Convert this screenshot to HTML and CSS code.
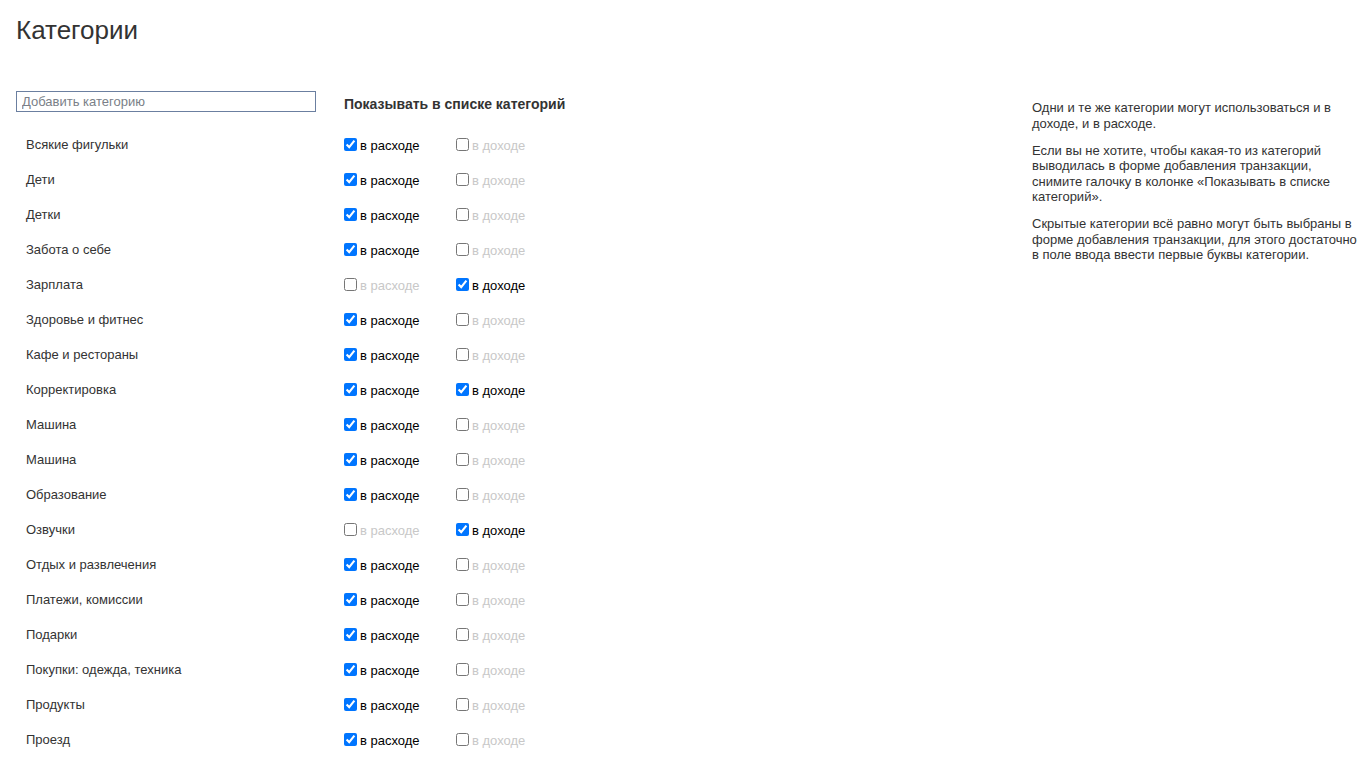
FILE: index.html
```html
<!DOCTYPE html>
<html>
<head>
<meta charset="utf-8">
<link rel="stylesheet" href="styles.css">
</head>
<body>

<div class="page">
  <h1>Категории</h1>

  <div class="main">
    <div class="list">
      <div class="head">
        <div class="name-col">
          <input type="text" class="add-input" placeholder="Добавить категорию">
        </div>
        <div class="head-title">Показывать в списке категорий</div>
      </div>

      <div id="rows"></div>
    </div>

    <div class="help">
      <p>Одни и те же категории могут использоваться и в доходе, и в расходе.</p>
      <p>Если вы не хотите, чтобы какая-то из категорий выводилась в форме добавления транзакции, снимите галочку в колонке «Показывать в списке категорий».</p>
      <p>Скрытые категории всё равно могут быть выбраны в форме добавления транзакции, для этого достаточно в поле ввода ввести первые буквы категории.</p>
    </div>
  </div>
</div>

<script>
  const categories = [
    ['Всякие фигульки', 1, 0],
    ['Дети', 1, 0],
    ['Детки', 1, 0],
    ['Забота о себе', 1, 0],
    ['Зарплата', 0, 1],
    ['Здоровье и фитнес', 1, 0],
    ['Кафе и рестораны', 1, 0],
    ['Корректировка', 1, 1],
    ['Машина', 1, 0],
    ['Машина', 1, 0],
    ['Образование', 1, 0],
    ['Озвучки', 0, 1],
    ['Отдых и развлечения', 1, 0],
    ['Платежи, комиссии', 1, 0],
    ['Подарки', 1, 0],
    ['Покупки: одежда, техника', 1, 0],
    ['Продукты', 1, 0],
    ['Проезд', 1, 0]
  ];

  function check(text, on) {
    const label = document.createElement('label');
    label.className = 'opt' + (on ? ' on' : '');
    const box = document.createElement('input');
    box.type = 'checkbox';
    box.checked = !!on;
    box.addEventListener('change', function() {
      label.classList.toggle('on', box.checked);
    });
    const span = document.createElement('span');
    span.textContent = text;
    label.appendChild(box);
    label.appendChild(span);
    return label;
  }

  const rows = document.getElementById('rows');
  categories.forEach(function(c) {
    const row = document.createElement('div');
    row.className = 'row';
    const name = document.createElement('div');
    name.className = 'name-col cat-name';
    name.textContent = c[0];
    row.appendChild(name);
    row.appendChild(check('в расходе', c[1]));
    row.appendChild(check('в доходе', c[2]));
    rows.appendChild(row);
  });
</script>

</body>
</html>
```

FILE: styles.css
```css
body {
  font-family: "Liberation Sans", Arial, sans-serif;
  font-size: 13px;
  color: #333;
  margin: 0;
  padding: 0;
  background-color: #fff;
}

.page {
  padding: 16px 6px 0 16px;
}

h1 {
  font-size: 26px;
  font-weight: normal;
  line-height: 28px;
  margin: 0;
  color: #333;
}

.main {
  display: flex;
  margin-top: 47px;
}

.list {
  flex: 1;
}

.head {
  display: flex;
  align-items: flex-start;
  height: 36px;
}

.name-col {
  width: 300px;
  margin-right: 28px;
  flex-shrink: 0;
}

.add-input {
  box-sizing: border-box;
  width: 300px;
  height: 21px;
  padding: 1px 5px;
  border: 1px solid #6b7fa0;
  border-radius: 0;
  font-family: inherit;
  font-size: 13px;
  color: #333;
}

.add-input::placeholder {
  color: #7a7f88;
}

.add-input:focus {
  outline: none;
}

.head-title {
  font-size: 14px;
  font-weight: bold;
  line-height: 16px;
  margin-top: 5px;
}

.row {
  display: flex;
  align-items: center;
  height: 35px;
}

.cat-name {
  padding-left: 10px;
  box-sizing: border-box;
}

.opt {
  display: inline-flex;
  align-items: center;
  width: 112px;
  color: #c8c8c8;
  cursor: pointer;
}

.opt span {
  position: relative;
  top: 1px;
}

.opt.on {
  color: #000;
}

.opt input {
  margin: 0 3px 0 0;
  width: 13px;
  height: 13px;
}

.help {
  flex: 0 0 327px;
  font-size: 13px;
  line-height: 15.5px;
  margin-top: 9px;
}

.help p {
  margin: 0 0 11.5px;
}
```
